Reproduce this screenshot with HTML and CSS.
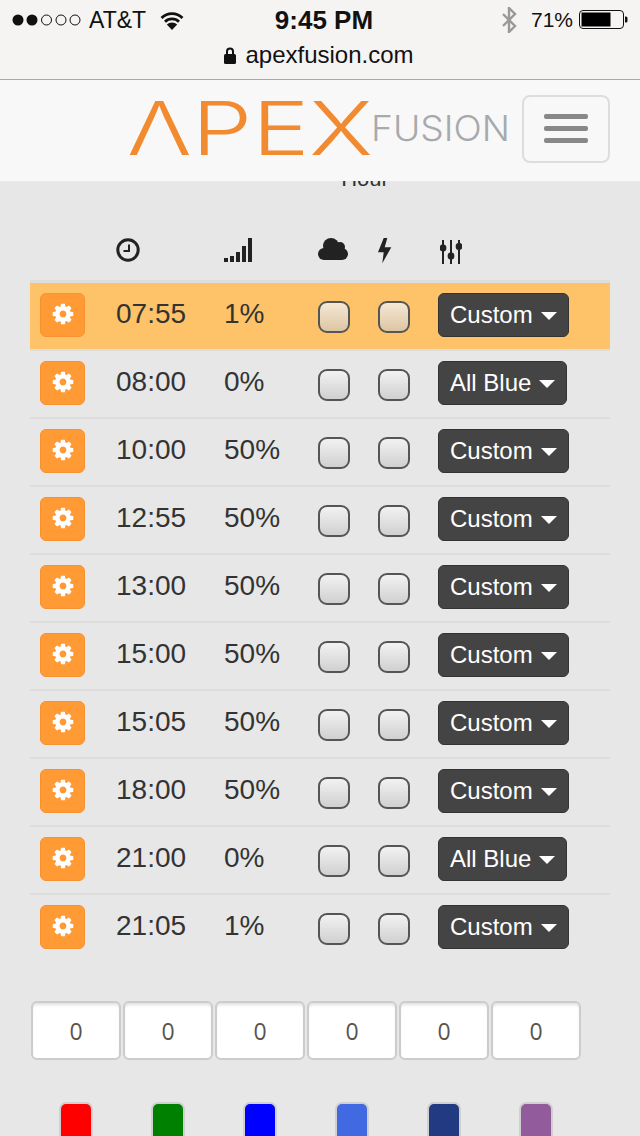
FILE: index.html
```html
<!DOCTYPE html>
<html lang="en">
<head>
<meta charset="utf-8">
<title>Apex Fusion</title>
<link rel="stylesheet" href="styles.css">
</head>
<body>
<svg class="defs" width="0" height="0" aria-hidden="true"><defs>
<symbol id="cog" viewBox="0 0 1792 1792"><path d="M1152 896q0-106-75-181t-181-75-181 75-75 181 75 181 181 75 181-75 75-181zm512-109v222q0 12-8 23t-20 13l-185 28q-19 54-39 91 35 50 107 138 10 12 10 25t-9 23q-27 37-99 108t-94 71q-12 0-26-9l-138-108q-44 23-91 38-16 136-29 186-7 28-36 28h-222q-14 0-24.5-8.5t-11.5-21.5l-28-184q-49-16-90-37l-141 107q-10 9-25 9-14 0-25-11-126-114-165-168-7-10-7-23 0-12 8-23 15-21 51-66.5t54-70.5q-27-50-41-99l-183-27q-13-2-21-12.5t-8-23.5v-222q0-12 8-23t19-13l186-28q14-46 39-92-40-57-107-138-10-12-10-24 0-10 9-23 26-36 98.5-107.5t94.5-71.5q13 0 26 10l138 107q44-23 91-38 16-136 29-186 7-28 36-28h222q14 0 24.5 8.5t11.5 21.5l28 184q49 16 90 37l142-107q9-9 24-9 13 0 25 10 129 119 165 170 7 8 7 22 0 12-8 23-15 21-51 66.5t-54 70.5q26 50 41 98l183 28q13 2 21 12.5t8 23.5z"/></symbol>
</defs></svg>

<header class="ios">
  <div class="status">
    <div class="status-left">
      <svg class="dots" width="70" height="12" viewBox="0 0 70 12"><circle cx="6" cy="6" r="5.5"/><circle cx="20" cy="6" r="5.5"/><circle class="off" cx="34.5" cy="6" r="5"/><circle class="off" cx="49" cy="6" r="5"/><circle class="off" cx="63" cy="6" r="5"/></svg>
      <span class="carrier">AT&amp;T</span>
      <svg class="wifi" width="24" height="19" viewBox="0 0 24 19"><path d="M1.500 7a15 15 0 0 1 21 0M5 10.700a10 10 0 0 1 14 0" fill="none" stroke="#111" stroke-width="2.800"/><path d="M12 19L6.800 13.500a7.500 7.500 0 0 1 10.400 0z" fill="#111"/></svg>
    </div>
    <div class="clock-time">9:45 PM</div>
    <div class="status-right">
      <svg class="bt" width="16" height="26" viewBox="0 0 16 26"><path d="M2 7l12 12-6 6V1l6 6L2 19" fill="none" stroke="#999" stroke-width="2.400"/></svg>
      <span class="pct-batt">71%</span>
      <svg class="batt" width="49" height="20" viewBox="0 0 49 20"><rect x=".5" y=".5" width="44" height="18" rx="3.500" fill="none" stroke="#111"/><rect x="2.500" y="2.500" width="29" height="14" fill="#000"/><path d="M46 6.500h1a1.500 1.500 0 0 1 1.500 1.500v3a1.500 1.500 0 0 1-1.500 1.500h-1z" fill="#111"/></svg>
    </div>
  </div>
  <div class="url">
    <svg class="lock" width="12" height="17" viewBox="0 0 12 17"><path d="M3 8V4.500a3 3 0 0 1 6 0V8" fill="none" stroke="#111" stroke-width="2"/><rect y="7" width="12" height="10" rx="1.500" fill="#111"/></svg>
    <span>apexfusion.com</span>
  </div>
</header>

<nav class="nav">
  <svg class="logo" width="380" height="60" viewBox="0 0 380 60" role="img" aria-label="Apex Fusion">
    <text class="logo-apex" x="-3" y="56" textLength="246" lengthAdjust="spacingAndGlyphs">ΛPEX</text>
    <text class="logo-fusion" x="241" y="42" textLength="139" lengthAdjust="spacingAndGlyphs">FUSION</text>
  </svg>
  <div class="toggle"><i></i><i></i><i></i></div>
</nav>

<main>
  <div class="hour">Hour</div>
  <div class="grid-row head">
    <span></span>
    <svg width="24" height="24" viewBox="0 0 24 24"><circle cx="12" cy="12" r="10.200" fill="none" stroke="#222" stroke-width="3"/><path d="M13 6.500V13H7.500" fill="none" stroke="#222" stroke-width="2"/></svg>
    <svg width="28" height="24" viewBox="0 0 28 24" fill="#222"><rect y="20" width="4" height="4"/><rect x="6" y="18" width="4" height="6"/><rect x="12" y="14" width="4" height="10"/><rect x="18" y="8" width="4" height="16"/><rect x="24" width="4" height="24"/></svg>
    <svg class="h-cloud" width="30" height="22" viewBox="0 0 30 22" fill="#222"><circle cx="6" cy="16" r="6"/><circle cx="13" cy="8" r="8"/><circle cx="22" cy="9" r="5"/><circle cx="24" cy="16" r="6"/><rect x="6" y="10" width="18" height="12"/></svg>
    <svg class="h-bolt" width="14" height="26" viewBox="0 0 14 26" fill="#222"><polygon points="5.700,0 9.300,0 6.700,9.300 13.300,9.300 4.300,25.300 5.700,14.300 0,14.300"/></svg>
    <svg class="h-sliders" width="22" height="24" viewBox="0 0 22 24" fill="#222"><rect x="2" width="2" height="24"/><rect x="10" width="2" height="24"/><rect x="18" width="2" height="24"/><rect x="-.3" y="4.500" width="6.600" height="7" rx="3"/><rect x="7.700" y="12.500" width="6.600" height="7" rx="3"/><rect x="15.700" y="3" width="6.600" height="7" rx="3"/></svg>
  </div>

  <div class="grid-row item now">
    <button class="cog"><svg width="24" height="24"><use href="#cog"/></svg></button><span>07:55</span><span>1%</span><span class="check"></span><span class="check"></span><span class="mode">Custom<b></b></span>
  </div>
  <div class="grid-row item">
    <button class="cog"><svg width="24" height="24"><use href="#cog"/></svg></button><span>08:00</span><span>0%</span><span class="check"></span><span class="check"></span><span class="mode">All Blue<b></b></span>
  </div>
  <div class="grid-row item">
    <button class="cog"><svg width="24" height="24"><use href="#cog"/></svg></button><span>10:00</span><span>50%</span><span class="check"></span><span class="check"></span><span class="mode">Custom<b></b></span>
  </div>
  <div class="grid-row item">
    <button class="cog"><svg width="24" height="24"><use href="#cog"/></svg></button><span>12:55</span><span>50%</span><span class="check"></span><span class="check"></span><span class="mode">Custom<b></b></span>
  </div>
  <div class="grid-row item">
    <button class="cog"><svg width="24" height="24"><use href="#cog"/></svg></button><span>13:00</span><span>50%</span><span class="check"></span><span class="check"></span><span class="mode">Custom<b></b></span>
  </div>
  <div class="grid-row item">
    <button class="cog"><svg width="24" height="24"><use href="#cog"/></svg></button><span>15:00</span><span>50%</span><span class="check"></span><span class="check"></span><span class="mode">Custom<b></b></span>
  </div>
  <div class="grid-row item">
    <button class="cog"><svg width="24" height="24"><use href="#cog"/></svg></button><span>15:05</span><span>50%</span><span class="check"></span><span class="check"></span><span class="mode">Custom<b></b></span>
  </div>
  <div class="grid-row item">
    <button class="cog"><svg width="24" height="24"><use href="#cog"/></svg></button><span>18:00</span><span>50%</span><span class="check"></span><span class="check"></span><span class="mode">Custom<b></b></span>
  </div>
  <div class="grid-row item">
    <button class="cog"><svg width="24" height="24"><use href="#cog"/></svg></button><span>21:00</span><span>0%</span><span class="check"></span><span class="check"></span><span class="mode">All Blue<b></b></span>
  </div>
  <div class="grid-row item">
    <button class="cog"><svg width="24" height="24"><use href="#cog"/></svg></button><span>21:05</span><span>1%</span><span class="check"></span><span class="check"></span><span class="mode">Custom<b></b></span>
  </div>

  <div class="channels">
    <div class="value">0</div><div class="value">0</div><div class="value">0</div><div class="value">0</div><div class="value">0</div><div class="value">0</div>
  </div>
  <div class="swatches">
    <div class="swatch red"></div><div class="swatch green"></div><div class="swatch blue"></div><div class="swatch royal"></div><div class="swatch navy"></div><div class="swatch purple"></div>
  </div>
</main>
</body>
</html>
```

FILE: styles.css
```css
* { box-sizing: border-box; }
html, body { margin: 0; height: 1136px; overflow: hidden; }
body { background: #e7e7e7; color: #333; font-family: "Liberation Sans", Arial, sans-serif; }
.defs { position: absolute; }

.ios { height: 80px; background: #f5f4f3; border-bottom: 1px solid #aaa; color: #111; position: relative; z-index: 2; }
.status { height: 40px; display: grid; grid-template-columns: 1fr auto 1fr; align-items: center; padding: 0 12px; }
.status-left { display: flex; align-items: center; }
.dots { fill: #111; }
.dots .off { fill: none; stroke: #111; stroke-width: 1; }
.carrier { font-size: 23px; margin-left: 7px; }
.wifi { margin-left: 14px; }
.clock-time { font-size: 26px; font-weight: 700; margin-left: 8px; }
.status-right { display: flex; align-items: center; justify-content: flex-end; }
.bt { margin-right: 14px; }
.pct-batt { font-size: 21px; margin-right: 6px; }
.url { height: 39px; display: flex; justify-content: center; align-items: center; gap: 9px; font-size: 24px; padding-bottom: 9px; margin-left: -2px; }

.nav { height: 101px; background: #f8f8f8; display: flex; align-items: center; justify-content: flex-end; padding: 0 30px 4px 0; position: relative; z-index: 2; }
.logo { display: block; margin-right: 12px; overflow: visible; font-family: Inter, Lato, "Liberation Sans", sans-serif; font-weight: 300; }
.logo-apex { fill: #f28a30; font-size: 74px; }
.logo-fusion { fill: #a7a9ac; font-size: 36px; }
.toggle { width: 88px; height: 68px; border: 2px solid #ddd; border-radius: 8px; display: flex; flex-direction: column; justify-content: center; align-items: center; gap: 7px; }
.toggle i { display: block; width: 44px; height: 5px; border-radius: 2px; background: #888; }

.hour { margin-top: -14px; height: 24px; line-height: 24px; font-size: 22px; text-align: center; padding-left: 90px; }

.grid-row { display: grid; grid-template-columns: 76px 108px 94px 60px 60px 1fr; margin: 0 30px; padding-left: 10px; align-items: center; }
.head { height: 89px; padding-top: 45px; padding-bottom: 20px; }
.head svg { display: block; }
.h-cloud { margin-top: -2px; }
.h-bolt { margin-top: 1px; }
.h-sliders { margin: 4px 0 0 2px; }
.item { height: 68px; border-top: 2px solid #ddd; font-size: 28px; padding-bottom: 2px; }
.item > span { margin-bottom: 2px; }
.item.now { height: 69px; border-top-width: 3px; background: #fec368; background-clip: padding-box; }
.cog { width: 45px; height: 44px; padding: 0 0 2px; background: #ff9a35; border: 1px solid #f7922f; border-radius: 6px; display: flex; align-items: center; justify-content: center; fill: #fff; }
.cog svg { display: block; }
.item > .check { width: 32px; height: 32px; margin: 4px 0 0; border: 2px solid #555; border-radius: 9px; background: linear-gradient(#f2f2f2, #d0d0d0); }
.now > .check { background: linear-gradient(#f6e8d6, #dcc5a2); }
.item > .mode { justify-self: start; display: inline-flex; align-items: center; height: 44px; margin: 0; padding: 0 11px; background: #444; border: 1px solid #333; border-radius: 6px; color: #fff; font-size: 24px; }
.mode b { width: 0; height: 0; margin-left: 8px; margin-top: 2px; border-left: 8px solid transparent; border-right: 8px solid transparent; border-top: 8px solid #fff; }

.channels { display: flex; margin: 40px 0 0 31px; gap: 2px; }
.value { width: 90px; height: 59px; background: #fff; border: 2px solid #ccc; border-radius: 6px; box-shadow: inset 0 3px 3px -1px rgba(0, 0, 0, .12); font-family: "Open Sans", sans-serif; font-size: 23px; color: #555; display: flex; align-items: center; justify-content: center; }

.swatches { display: flex; margin: 42px 0 0 30px; gap: 58px; padding-left: 29px; }
.swatch { width: 34px; height: 60px; border: 2px solid #d0d0d0; border-radius: 7px; }
.red { background: #f00; }
.green { background: #008000; }
.blue { background: #00f; }
.royal { background: #4169e1; }
.navy { background: #223a82; }
.purple { background: #925b9c; }
```
